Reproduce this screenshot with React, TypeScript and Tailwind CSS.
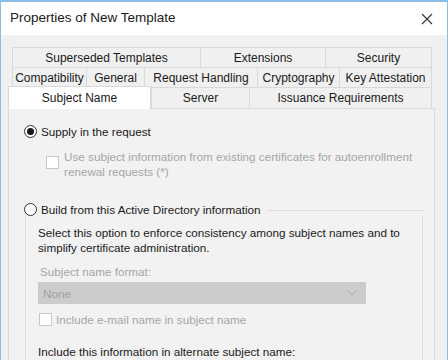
import React from 'react';

const font = { fontFamily: '"Segoe UI", "Liberation Sans", Arial, sans-serif' };

const Tab = ({ label, w }: { label: string; w: string }) => (
  <div className={`${w} h-full flex items-center justify-center border-t border-l border-[#d9d9d9] last:border-r text-[12px] text-[#1a1a1a] bg-[#f0f0f0] leading-none`}>
    {label}
  </div>
);

const Radio = ({ checked }: { checked?: boolean }) => (
  <span className="w-[13px] h-[13px] rounded-full border border-[#333] bg-white flex items-center justify-center shrink-0">
    {checked && <span className="w-[7px] h-[7px] rounded-full bg-[#1a1a1a]" />}
  </span>
);

const Check = () => (
  <span className="block w-[13px] h-[13px] border border-[#c8c8c8] bg-white shrink-0" />
);

export default function App() {
  return (
    <div style={font} className="w-[448px] h-[360px] overflow-hidden bg-[#f0f0f0] border-t-2 border-x border-[#8cbde9] flex flex-col">
      {/* Title bar */}
      <div className="h-[33px] bg-white flex items-center justify-between pl-[9px] pr-[12px] shrink-0">
        <span className="text-[13.5px] text-[#1a1a1a]">Properties of New Template</span>
        <svg width="12" height="12" viewBox="0 0 12 12" className="mr-[2px]">
          <path d="M1 1L11 11M11 1L1 11" stroke="#333" strokeWidth="1.1" />
        </svg>
      </div>

      <div className="flex-1 pl-[7px] pr-[12px] pt-[12px]">
        {/* Tab rows */}
        <div className="pl-[4px] pr-[2px]">
          <div className="flex h-[20px]">
            <Tab label="Superseded Templates" w="w-[188px]" />
            <Tab label="Extensions" w="w-[125px]" />
            <Tab label="Security" w="w-[107px]" />
          </div>
          <div className="flex h-[20px]">
            <Tab label="Compatibility" w="w-[74px]" />
            <Tab label="General" w="w-[58px]" />
            <Tab label="Request Handling" w="w-[113px]" />
            <Tab label="Cryptography" w="w-[82px]" />
            <Tab label="Key Attestation" w="w-[93px]" />
          </div>
        </div>
        <div className="flex h-[21px] items-end pr-[2px]">
          <div className="w-[143px] h-[23px] -mb-[1px] relative z-10 bg-white border-t border-x border-[#d9d9d9] flex items-center justify-center text-[12px] text-[#1a1a1a]">
            Subject Name
          </div>
          <Tab label="Server" w="w-[98px]" />
          <Tab label="Issuance Requirements" w="w-[183px]" />
        </div>

        {/* Panel */}
        <div className="border border-[#d9d9d9] bg-[#f2f2f2] h-[260px] pl-[15px] pr-[11px] pt-[15px] text-[11.7px] leading-[15px]">
          <div className="flex items-center gap-[4px] text-[#1a1a1a]">
            <Radio checked />
            <span>Supply in the request</span>
          </div>
          <div className="flex items-start gap-[5px] pl-[22px] mt-[10px] text-[#a6a6a6]">
            <span className="mt-[7px]"><Check /></span>
            <span>Use subject information from existing certificates for autoenrollment<br />renewal requests (*)</span>
          </div>

          <div className="mt-[23px] flex items-center">
            <div className="flex items-center gap-[4px] text-[#1a1a1a] shrink-0 pr-[6px]">
              <Radio />
              <span>Build from this Active Directory information</span>
            </div>
            <div className="flex-1 border-t border-[#dcdcdc] mt-[1px]" />
          </div>
          <div className="ml-[1px] border-l border-r border-[#dcdcdc] pl-[12px] pr-[10px] pt-[8px] h-[160px]">
            <div className="text-[#1a1a1a]">
              Select this option to enforce consistency among subject names and to<br />simplify certificate administration.
            </div>
            <div className="text-[#a6a6a6] mt-[9px] pl-[2px]">Subject name format:</div>
            <div className="mt-[3px] w-[328px] h-[22px] bg-[#cccccc] flex items-center justify-between pl-[5px] pr-[9px] text-[#a0a0a0]">
              <span>None</span>
              <svg width="10" height="6" viewBox="0 0 10 6">
                <path d="M0.5 0.5L5 5L9.5 0.5" fill="none" stroke="#aaaaaa" strokeWidth="1" />
              </svg>
            </div>
            <div className="flex items-center gap-[4px] mt-[8px] pl-[1px] text-[#a6a6a6]">
              <Check />
              <span>Include e-mail name in subject name</span>
            </div>
            <div className="mt-[17px] text-[#1a1a1a]">Include this information in alternate subject name:</div>
          </div>
        </div>
      </div>
    </div>
  );
}
